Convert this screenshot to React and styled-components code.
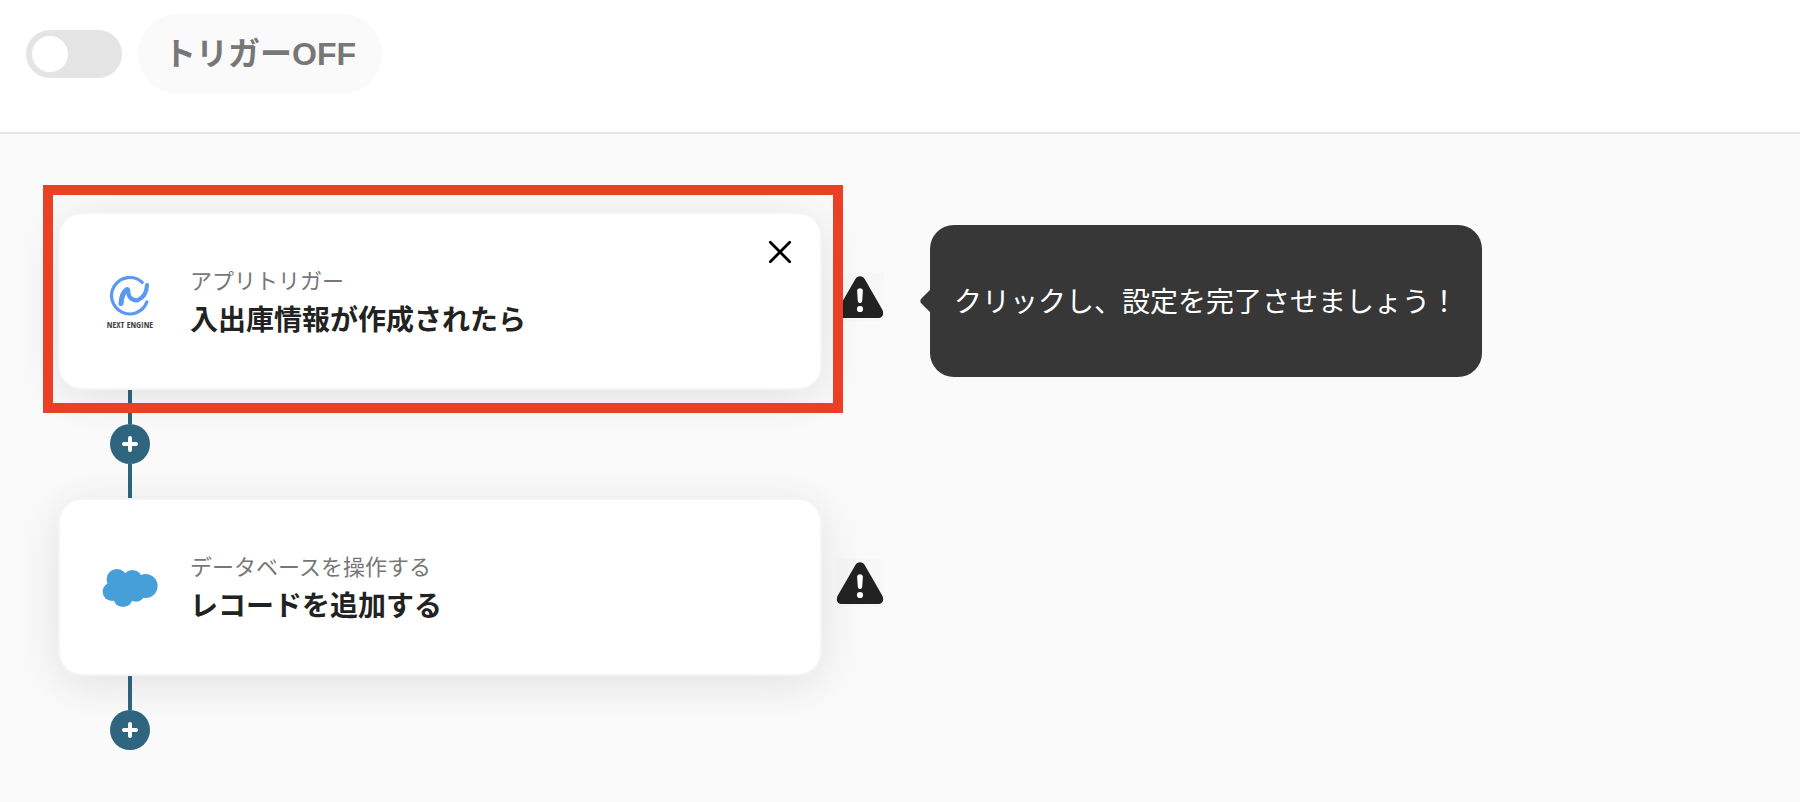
import React, {useState} from "react";
import styled, {createGlobalStyle} from "styled-components";


const App = () => {

    const [isOn, setIsOn] = useState(false);

    return (
        <Page>
            <GlobalStyle/>
            <Header>
                <Toggle
                    id="trigger"
                    type="checkbox"
                    role="switch"
                    checked={isOn}
                    onChange={(e) => setIsOn(e.target.checked)}
                />
                <TriggerLabel htmlFor="trigger">
                    {isOn ? 'トリガーON' : 'トリガーOFF'}
                </TriggerLabel>
            </Header>
            <Flow>
                <Step>
                    <CardArea>
                        <Card>
                            <NextEngineLogo/>
                            <Texts>
                                <Kind>アプリトリガー</Kind>
                                <Name>入出庫情報が作成されたら</Name>
                            </Texts>
                            <CloseButton type="button" aria-label="閉じる">
                                <CloseIcon/>
                            </CloseButton>
                        </Card>
                        <Highlight/>
                    </CardArea>
                    <WarningIcon/>
                    <Tooltip>クリックし、設定を完了させましょう！</Tooltip>
                </Step>
                <AddStep hasNext/>
                <Step>
                    <CardArea>
                        <Card>
                            <CloudLogo/>
                            <Texts>
                                <Kind>データベースを操作する</Kind>
                                <Name>レコードを追加する</Name>
                            </Texts>
                        </Card>
                    </CardArea>
                    <WarningIcon/>
                </Step>
                <AddStep/>
            </Flow>
        </Page>
    )
}

export default App;

const AddStep = ({hasNext}) => (
    <Connector>
        <Line/>
        <AddButton type="button" aria-label="追加">
            <svg width="16" height="16" viewBox="0 0 16 16">
                <path d="M8 2V14M2 8H14" stroke="#fff" strokeWidth="4" strokeLinecap="round"/>
            </svg>
        </AddButton>
        {hasNext && <Line/>}
    </Connector>
)

const CloseIcon = () => (
    <svg width="24" height="24" viewBox="0 0 24 24">
        <path d="M2.3 2.3L21.7 21.7M21.7 2.3L2.3 21.7" stroke="#000" strokeWidth="2.8" strokeLinecap="round"/>
    </svg>
)

const WarningIcon = () => (
    <Warning viewBox="0 0 48 48" role="img" aria-label="警告">
        <path
            d="M19.4 6C21.4 2.2 26.6 2.2 28.7 6L46.2 36.6C48.4 40.8 46.8 45 42 45H6C1.2 45 -0.4 40.8 1.8 36.6Z"
            fill="#222"
        />
        <path d="M21.1 17.8C21.1 14.3 26.9 14.3 26.9 17.8L26.2 27.7C26 30.8 22 30.8 21.8 27.7Z" fill="#fff"/>
        <circle cx="24" cy="36" r="3.1" fill="#fff"/>
    </Warning>
)

const NextEngineLogo = () => (
    <Logo>
        <svg width="42" height="42" viewBox="0 0 42 42" fill="none" stroke="#5b98f2" strokeLinecap="round">
            <path d="M33.2 7.4A18.2 18.2 0 1 0 37.9 26.9" strokeWidth="3.2"/>
            <path d="M12 28.3C12.5 20.8 15 16.4 17.6 14.6C19.1 14 19.6 15 19.3 18C20.2 23.8 25.2 26.3 29.2 24.9C34.5 22.7 37.6 17.4 38 10.2" strokeWidth="4.2"/>
            <path d="M12 28.6C12.6 21 15 16.6 18 14.6" strokeWidth="5"/>
        </svg>
        <LogoText>NEXT ENGINE</LogoText>
    </Logo>
)

const CloudLogo = () => (
    <Logo>
        <svg width="56" height="40" viewBox="0 0 56 40" fill="#479fda">
            <circle cx="14.9" cy="11.4" r="10.4"/>
            <circle cx="30.4" cy="11.8" r="9.8"/>
            <circle cx="43.6" cy="18" r="12"/>
            <circle cx="10" cy="23.6" r="9.4"/>
            <circle cx="21" cy="29.2" r="9.8"/>
            <circle cx="34" cy="24.6" r="9.2"/>
            <circle cx="24" cy="20" r="12"/>
        </svg>
    </Logo>
)

const GlobalStyle = createGlobalStyle`
  * {
    box-sizing: border-box;
  }
  body {
    margin: 0;
    background-color: #fafafa;
    font-family: "Liberation Sans", "Noto Sans CJK JP", sans-serif;
  }
  button {
    padding: 0;
    border: none;
    background: none;
    cursor: pointer;
  }
  svg {
    display: block;
  }
`;
const Page = styled.div`
  min-height: 100vh;
  overflow: hidden;
`;
const Header = styled.header`
  display: flex;
  align-items: center;
  gap: 16px;
  padding: 14px 26px 38px;
  background-color: #fff;
  border-bottom: 2px solid #e4e4e4;
`;
const Toggle = styled.input`
  appearance: none;
  width: 96px;
  height: 48px;
  margin: 0;
  padding: 6px;
  border-radius: 24px;
  background-color: ${({checked}) => checked ? '#2f657f' : '#e4e4e4'};
  cursor: pointer;

  &::before {
    content: "";
    display: block;
    width: 36px;
    height: 36px;
    margin-left: ${({checked}) => checked ? '48px' : '0'};
    border-radius: 50%;
    background-color: #fff;
  }
`;
const TriggerLabel = styled.label`
  padding: 0 26px;
  border-radius: 40px;
  background-color: #fafafa;
  color: #777;
  font-size: 32px;
  font-weight: bold;
  line-height: 80px;
  cursor: pointer;
`;
const Flow = styled.main`
  padding: 78px 58px 52px;
`;
const Step = styled.section`
  display: flex;
  align-items: center;
`;
const CardArea = styled.div`
  position: relative;
  flex: 0 1 764px;
`;
const Card = styled.div`
  display: flex;
  align-items: center;
  gap: 30px;
  height: 178px;
  padding: 18px 20px 18px 40px;
  border: 2px solid #f5f5f5;
  border-radius: 24px;
  background-color: #fff;
  box-shadow: 0 8px 48px rgba(0, 0, 0, 0.1);
`;
const Highlight = styled.div`
  position: absolute;
  inset: -27px -21px -23px -15px;
  z-index: 1;
  border: 10px solid #ea4025;
  pointer-events: none;
`;
const Logo = styled.div`
  display: flex;
  flex-direction: column;
  align-items: center;
  gap: 3px;
  width: 60px;
  padding-top: 2px;
`;
const LogoText = styled.span`
  color: #444;
  font-family: "Open Sans Condensed", "Liberation Sans", sans-serif;
  font-size: 9px;
  font-weight: bold;
  line-height: 10px;
  white-space: nowrap;
`;
const Texts = styled.div`
  flex: 1;
  padding-top: 4px;
`;
const Kind = styled.div`
  color: #777;
  font-size: 22px;
  line-height: 36px;
`;
const Name = styled.div`
  color: #222;
  font-size: 28px;
  font-weight: bold;
  line-height: 42px;
`;
const CloseButton = styled.button`
  display: flex;
  align-items: center;
  justify-content: center;
  align-self: flex-start;
  width: 40px;
  height: 40px;
`;
const Warning = styled.svg`
  flex: none;
  width: 48px;
  height: 48px;
  margin: 0 46px 8px 14px;
  background-color: rgba(0, 0, 0, 0.01);
`;
const Tooltip = styled.div`
  position: relative;
  padding: 4px 24px 0;
  border-radius: 24px;
  background-color: #373737;
  color: #fff;
  font-size: 28px;
  line-height: 148px;
  white-space: nowrap;

  &::before {
    content: "";
    position: absolute;
    top: 50%;
    left: -7px;
    width: 20px;
    height: 20px;
    border-radius: 4px;
    background-color: #373737;
    transform: translateY(-50%) rotate(45deg);
  }
`;
const Connector = styled.div`
  display: flex;
  flex-direction: column;
  align-items: center;
  width: 40px;
  margin-left: 52px;
`;
const Line = styled.div`
  width: 4px;
  height: 34px;
  background-color: #2f657f;
`;
const AddButton = styled.button`
  display: flex;
  align-items: center;
  justify-content: center;
  width: 40px;
  height: 40px;
  border-radius: 50%;

  && {
    background-color: #2f657f;
  }
`;
